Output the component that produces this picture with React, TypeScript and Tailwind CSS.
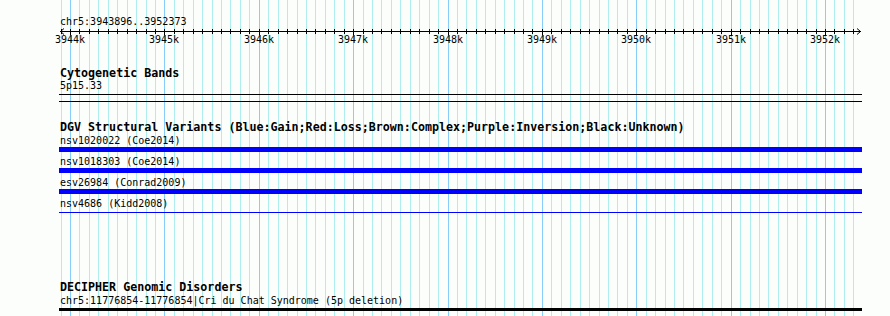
const VIEW_START = 3943896;
const VIEW_END = 3952373;
const X_3944K = 70;
const PX_PER_100BP = 9.4375;

// one grid line every 100bp, darker every 1kb
const gridLines = Array.from({ length: 85 }, (_, k) => {
  const i = k - 1;
  return { x: Math.round(X_3944K + PX_PER_100BP * i) + 0.5, major: i % 10 === 0 };
});

const majorTicks = gridLines.filter((g) => g.major).map((g, i) => ({ x: g.x - 0.5, label: `${3944 + i}k` }));

const dgvFeatures = [
  { name: "nsv1020022 (Coe2014)", kind: "bar" },
  { name: "nsv1018303 (Coe2014)", kind: "bar" },
  { name: "esv26984 (Conrad2009)", kind: "bar" },
  { name: "nsv4686 (Kidd2008)", kind: "line" },
];

function GridAndAxis() {
  return (
    <svg className="absolute inset-0" width={890} height={316}>
      {gridLines.map((g) => (
        <line key={g.x} x1={g.x} x2={g.x} y1={0} y2={316} stroke={g.major ? "#87cefa" : "#afeeee"} strokeWidth={1} />
      ))}
      <g stroke="#000" strokeWidth={1} fill="none">
        <line x1={60} x2={861} y1={31.5} y2={31.5} />
        <polyline points="64,28.5 60.5,31.5 64,34.5" />
        <polyline points="857,28.5 860.5,31.5 857,34.5" />
        {gridLines
          .filter((g) => g.x > 60 && g.x < 858)
          .map((g) => (
            <line key={g.x} x1={g.x} x2={g.x} y1={29} y2={g.major ? 35 : 34} />
          ))}
      </g>
    </svg>
  );
}

export default function App() {
  return (
    <div className="relative w-[890px] h-[316px] overflow-hidden bg-[#fcfefc] text-black font-['DejaVu_Sans_Mono',monospace]">
      <GridAndAxis />
      <div className="relative ml-[59px] w-[803px]">
        {/* ruler */}
        <div className="pt-[16px] pl-px text-[10px] leading-[12px]">
          chr5:{VIEW_START}..{VIEW_END}
        </div>
        <div className="relative h-[20px] text-[10px] leading-[12px]">
          {majorTicks.map((t) => (
            <span key={t.label} className="absolute top-[6px] whitespace-nowrap" style={{ left: t.x - 59 - 15 }}>
              {t.label}
            </span>
          ))}
        </div>

        {/* cytogenetic bands */}
        <div className="mt-[19px]">
          <div className="pl-px text-[11.67px] leading-[13px] font-bold">Cytogenetic Bands</div>
          <div className="pl-px text-[10px] leading-[12px]">5p15.33</div>
          <div className="mt-[2px] h-[8px] border-y border-black" />
        </div>

        {/* DGV */}
        <div className="mt-[19px]">
          <div className="pl-px text-[11.67px] leading-[13px] font-bold whitespace-nowrap">
            DGV Structural Variants (Blue:Gain;Red:Loss;Brown:Complex;Purple:Inversion;Black:Unknown)
          </div>
          <div className="mt-px flex flex-col gap-[4px]">
            {dgvFeatures.map((f) => (
              <div key={f.name}>
                <div className="pl-px text-[10px] leading-[12px]">{f.name}</div>
                {f.kind === "bar" ? (
                  <div className="h-[5px] bg-[#0000ff]" />
                ) : (
                  <div className="h-[5px] flex items-center">
                    <div className="h-px w-full bg-[#0000ff]" />
                  </div>
                )}
              </div>
            ))}
          </div>
        </div>

        {/* DECIPHER */}
        <div className="mt-[66px]">
          <div className="pl-px text-[11.67px] leading-[13px] font-bold">DECIPHER Genomic Disorders</div>
          <div className="mt-px pl-px text-[10px] leading-[12px] whitespace-nowrap">
            chr5:11776854-11776854|Cri du Chat Syndrome (5p deletion)
          </div>
          <div className="mt-px h-[3px] bg-black" />
        </div>
      </div>
    </div>
  );
}
